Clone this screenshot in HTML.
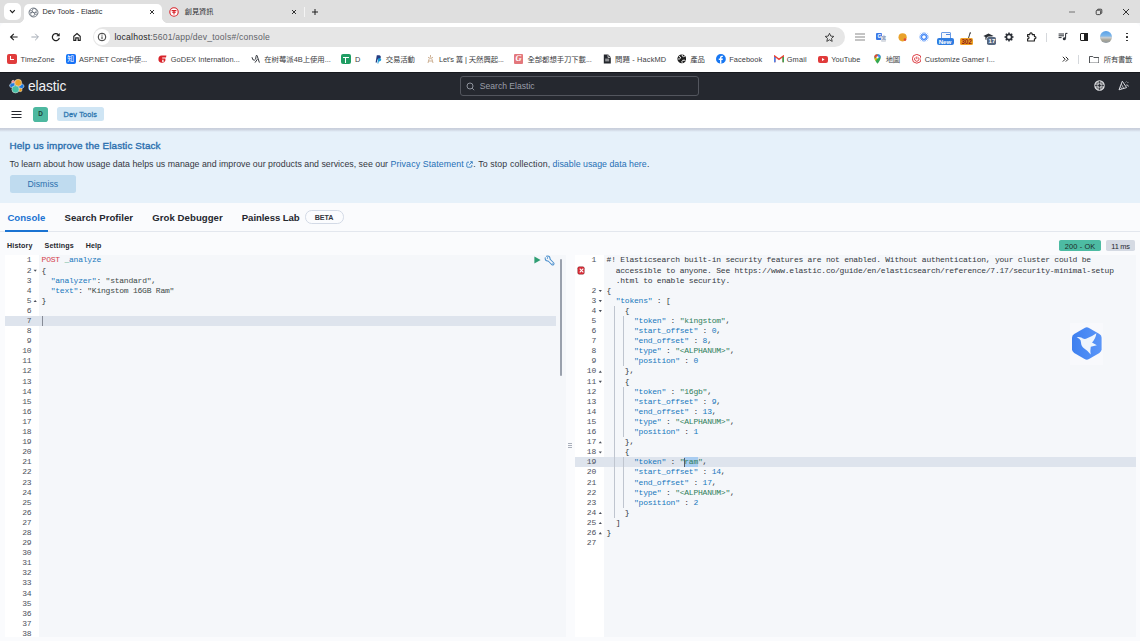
<!DOCTYPE html>
<html lang="en"><head><meta charset="utf-8"><title>Dev Tools - Elastic</title>
<style>
*{box-sizing:border-box;margin:0;padding:0}
html,body{width:1140px;height:641px;overflow:hidden;background:#fafbfd}
body{position:relative;font-family:"Liberation Sans","Noto Sans CJK TC",sans-serif;color:#343741}
.abs{position:absolute}
.t{position:absolute;white-space:nowrap;line-height:1}
/* chrome */
#tabstrip{left:0;top:0;width:1140px;height:23.3px;background:#dfdfdf}
#toolbar{left:0;top:23.3px;width:1140px;height:25.7px;background:#fff;border-radius:5px 5px 0 0}
#bookmarks{left:0;top:49px;width:1140px;height:23px;background:#fff}
#urlpill{left:93px;top:27px;width:752px;height:20px;border-radius:10px;background:#e6e6e6}
.bm{font-size:7.4px;color:#3c4043;top:55.5px}
.bmi{position:absolute;top:53.5px;width:9.5px;height:9.5px;border-radius:2px}
/* kibana */
#ehead{left:0;top:71.5px;width:1140px;height:28px;background:#25282f;border-top:.9px solid #17191e}
#sub{left:0;top:99.5px;width:1140px;height:28.3px;background:#fff}
#callout{left:0;top:127.8px;width:1140px;height:75.2px;background:#e6f1fa}
#subsh{left:0;top:127.8px;width:1140px;height:4.2px;background:linear-gradient(#c8cedb 0%,#ccd3df 35%,rgba(215,224,238,0) 100%)}
.mono{font-family:"Liberation Mono","DejaVu Sans Mono",monospace;font-size:8px;letter-spacing:-.232px;line-height:10.09px;white-space:pre;color:#343741}
.ln{position:absolute;text-align:right;color:#4d525d}
.k{color:#1878bd}.s{color:#2f7d5b}.sv{color:#3d4a48}.n{color:#1878bd}.m{color:#d63f4d}.u{color:#1878bd}
</style></head><body>
<!-- ===== browser chrome ===== -->
<div id="tabstrip" class="abs"></div>
<div id="toolbar" class="abs"></div>
<div id="bookmarks" class="abs"></div>
<div id="urlpill" class="abs"></div>

<!-- tab search -->
<div class="abs" style="left:4px;top:3px;width:16.5px;height:17px;border-radius:5px;background:#fff"></div>
<svg class="abs" style="left:8px;top:8px" width="9" height="8" viewBox="0 0 9 8"><path d="M2 2.2 L4.4 4.6 L6.8 2.2" fill="none" stroke="#1f1f1f" stroke-width="1.2"/></svg>
<!-- active tab -->
<div class="abs" style="left:24px;top:3.5px;width:137.5px;height:20.3px;border-radius:5px 5px 0 0;background:#fff"></div>
<div class="abs" style="left:19px;top:18.3px;width:5px;height:5px;background:radial-gradient(circle at 0 0,transparent 4.6px,#fff 5px)"></div>
<div class="abs" style="left:161.5px;top:18.3px;width:5px;height:5px;background:radial-gradient(circle at 100% 0,transparent 4.6px,#fff 5px)"></div>
<svg class="abs" style="left:27.5px;top:6.5px" width="11" height="11" viewBox="0 0 11 11"><circle cx="5.5" cy="5.5" r="4.5" fill="none" stroke="#5b6470" stroke-width=".8"/><circle cx="6.3" cy="3.6" r="2.1" fill="none" stroke="#5b6470" stroke-width=".7"/><circle cx="4.6" cy="7.2" r="2" fill="none" stroke="#5b6470" stroke-width=".7"/><circle cx="2.9" cy="4.6" r="1.2" fill="none" stroke="#5b6470" stroke-width=".6"/><circle cx="8" cy="6.6" r="1.2" fill="none" stroke="#5b6470" stroke-width=".6"/></svg>
<div class="t" style="left:42.5px;top:8.3px;font-size:7.3px;color:#2a2c30">Dev Tools - Elastic</div>
<svg class="abs" style="left:149px;top:9px" width="6" height="6" viewBox="0 0 6 6"><path d="M1 1L5 5M5 1L1 5" stroke="#1f1f1f" stroke-width=".9"/></svg>
<!-- tab 2 -->
<svg class="abs" style="left:169px;top:7px" width="10" height="10" viewBox="0 0 10 10"><circle cx="5" cy="5" r="4.2" fill="#fff" stroke="#d8232a" stroke-width="1.1"/><path d="M2.6 3.6H7.4M5 3.6V7.6M3.4 5.6Q5 4.4 6.6 5.6" stroke="#d8232a" stroke-width="1.1" fill="none"/></svg>
<div class="t" style="left:184.7px;top:8.2px;font-size:7.2px;color:#2a2c30">創見資訊</div>
<svg class="abs" style="left:290.5px;top:9px" width="6" height="6" viewBox="0 0 6 6"><path d="M1 1L5 5M5 1L1 5" stroke="#1f1f1f" stroke-width=".9"/></svg>
<div class="abs" style="left:304px;top:7px;width:1px;height:9.5px;background:#f4f4f4"></div>
<svg class="abs" style="left:310.5px;top:8px" width="8" height="8" viewBox="0 0 8 8"><path d="M4 1V7M1 4H7" stroke="#1f1f1f" stroke-width="1"/></svg>
<!-- window controls -->
<svg class="abs" style="left:1068px;top:8px" width="8" height="8" viewBox="0 0 8 8"><path d="M1 4H7" stroke="#555" stroke-width=".8"/></svg>
<svg class="abs" style="left:1095px;top:8px" width="8" height="8" viewBox="0 0 8 8"><rect x="1.2" y="2.2" width="4.4" height="4.4" rx="1" fill="none" stroke="#1f1f1f" stroke-width=".8"/><path d="M2.6 2.2V1.6Q2.6 1.2 3.2 1.2H6Q6.8 1.2 6.8 2V4.8Q6.8 5.4 6.2 5.4H5.6" fill="none" stroke="#1f1f1f" stroke-width=".8"/></svg>
<svg class="abs" style="left:1122px;top:8px" width="8" height="8" viewBox="0 0 8 8"><path d="M1 1L7 7M7 1L1 7" stroke="#1f1f1f" stroke-width=".9"/></svg>
<!-- toolbar icons -->
<svg class="abs" style="left:8.5px;top:32px" width="10" height="10" viewBox="0 0 10 10"><path d="M8.6 5H1.8M4.8 1.8L1.6 5L4.8 8.2" fill="none" stroke="#1f1f1f" stroke-width="1.15"/></svg>
<svg class="abs" style="left:29.5px;top:32px" width="10" height="10" viewBox="0 0 10 10"><path d="M1.4 5H8.2M5.2 1.8L8.4 5L5.2 8.2" fill="none" stroke="#a2a9b3" stroke-width="1"/></svg>
<svg class="abs" style="left:51px;top:32px" width="10" height="10" viewBox="0 0 10 10"><path d="M7.4 2.7A3.5 3.5 0 1 0 8.3 5.8" fill="none" stroke="#1f1f1f" stroke-width="1.25"/><path d="M8.7 .9V4.3H5.3Z" fill="#1f1f1f"/></svg>
<svg class="abs" style="left:72px;top:32px" width="10" height="10" viewBox="0 0 10 10"><path d="M1.8 8.4V4.2L5 1.6L8.2 4.2V8.4H6.2V5.8H3.8V8.4Z" fill="none" stroke="#1f1f1f" stroke-width="1.15"/></svg>
<!-- url -->
<div class="abs" style="left:94.4px;top:29.3px;width:15.6px;height:15.6px;border-radius:50%;background:#fff"></div>
<svg class="abs" style="left:97.3px;top:32.1px" width="10" height="10" viewBox="0 0 10 10"><circle cx="5" cy="5" r="3.8" fill="none" stroke="#1f1f1f" stroke-width=".9"/><path d="M5 4.4V7.2M5 2.6V3.6" stroke="#1f1f1f" stroke-width=".9"/></svg>
<div class="t" style="left:114.5px;top:33.2px;font-size:8.6px;letter-spacing:.2px;color:#1f1f1f">localhost<span style="color:#5f6368">:5601/app/dev_tools#/console</span></div>
<svg class="abs" style="left:824px;top:31.5px" width="11" height="11" viewBox="0 0 11 11"><path d="M5.5 1.3L6.8 4.1L9.8 4.4L7.5 6.4L8.2 9.4L5.5 7.8L2.8 9.4L3.5 6.4L1.2 4.4L4.2 4.1Z" fill="none" stroke="#333" stroke-width=".9" stroke-linejoin="round"/></svg>
<!-- bookmarks -->
<div class="t bm" style="left:20.5px;letter-spacing:0.176px">TimeZone</div>
<div class="t bm" style="left:79px;letter-spacing:-0.097px">ASP.NET Core中使...</div>
<div class="t bm" style="left:170.8px;letter-spacing:0.044px">GoDEX Internation...</div>
<div class="t bm" style="left:264.2px;letter-spacing:-0.026px">在树莓派4B上使用...</div>
<div class="t bm" style="left:355px;letter-spacing:-0.203px">D</div>
<div class="t bm" style="left:385.8px;letter-spacing:-0.191px">交易活動</div>
<div class="t bm" style="left:439px;letter-spacing:-0.103px">Let's 篝 | 天然興起...</div>
<div class="t bm" style="left:527.5px;letter-spacing:-0.091px">全部都想手刀下載...</div>
<div class="t bm" style="left:615px;letter-spacing:0.152px">問題 - HackMD</div>
<div class="t bm" style="left:690.3px;letter-spacing:-0.245px">產品</div>
<div class="t bm" style="left:729.2px;letter-spacing:0.065px">Facebook</div>
<div class="t bm" style="left:786.7px;letter-spacing:0.164px">Gmail</div>
<div class="t bm" style="left:831.3px;letter-spacing:-0.007px">YouTube</div>
<div class="t bm" style="left:885.8px;letter-spacing:-0.495px">地圖</div>
<div class="t bm" style="left:924.7px;letter-spacing:0.02px">Customize Gamer I...</div>
<div class="t bm" style="left:1103.8px;letter-spacing:-0.291px">所有書籤</div>


<!-- bookmark icons -->
<div class="bmi" style="left:7px;top:54.2px;background:#e03c3c"></div><div class="abs" style="left:10px;top:56px;width:1.3px;height:4px;background:#fff"></div><div class="abs" style="left:10px;top:59.3px;width:3.6px;height:1.2px;background:#fff"></div>
<div class="bmi" style="left:66px;top:54.2px;background:#1772f6"></div><div class="t" style="left:67.3px;top:55.6px;font-size:6.8px;color:#fff">知</div>
<svg class="abs" style="left:157px;top:54px" width="10" height="10" viewBox="0 0 10 10"><path d="M9.4 1.6H4.6A3.6 3.6 0 1 0 8.4 6.4V4.4H5V5.8H6.6V8H5.2V3.4H9Z" fill="#d8232a"/></svg>
<svg class="abs" style="left:251px;top:54px" width="10" height="10" viewBox="0 0 10 10"><path d="M1 3.2Q1.4 6.6 3.4 6.2Q5.2 5.6 5 2.4Q5 1.2 6 1.4L8.4 8.6M4 8.6L6.4 5.2" fill="none" stroke="#33373d" stroke-width="1"/></svg>
<div class="bmi" style="left:341px;top:54px;width:10px;height:10px;background:#1f9d63"></div><div class="abs" style="left:343px;top:56.6px;width:6px;height:1.5px;background:#fff"></div><div class="abs" style="left:344.8px;top:56.6px;width:1.6px;height:6px;background:#fff"></div>
<svg class="abs" style="left:373.5px;top:54px" width="8" height="10" viewBox="0 0 8 10"><path d="M1.6 8.6L2.8 1.2H5.4Q7.2 1.4 6.8 3.4Q6.4 5.4 4.2 5.4H3.4L2.9 8.6Z" fill="#253b80"/><path d="M3.4 9.6L4.2 4.2H6Q7.6 4.4 7.2 6Q6.8 7.4 5.2 7.4H4.7L4.4 9.6Z" fill="#179bd7"/></svg>
<svg class="abs" style="left:425.5px;top:54px" width="9" height="10" viewBox="0 0 9 10"><path d="M4.5 1V3.6M2 3.2L4.5 4.6L7 3.2M3.2 4.6L2 9M5.8 4.6L7 9M2.6 7H6.4" fill="none" stroke="#c8a98a" stroke-width=".9"/></svg>
<div class="bmi" style="left:513.7px;top:54.2px;background:#e3777c;border-radius:1px"></div><div class="t" style="left:515.4px;top:54.6px;font-size:8.4px;color:#fff;font-style:italic;font-weight:bold;font-family:'Liberation Serif',serif">G</div>
<svg class="abs" style="left:602.5px;top:54px" width="8.5" height="10" viewBox="0 0 8.5 10"><path d="M.8.6H5.2L7.8 3.2V9.4H.8Z" fill="#24272d"/><path d="M5 .8V3.4H7.6" fill="none" stroke="#fff" stroke-width=".7"/><path d="M2.2 5.2H6.2M2.2 6.8H6.2" stroke="#fff" stroke-width=".7"/></svg>
<svg class="abs" style="left:676.8px;top:54.2px" width="9.6" height="9.6" viewBox="0 0 10 10"><circle cx="5" cy="5" r="4.6" fill="#1f1f1f"/><path d="M2.2 2.4Q4 3 3.6 4.4Q3.2 5.4 1.2 5.2M5.4 .9Q5 2.6 6.8 2.8Q8.4 2.6 8 1.8M5.4 9.2Q4.6 7.2 6 6.6Q7.8 6.2 8.8 6.8" fill="none" stroke="#fff" stroke-width="1"/></svg>
<svg class="abs" style="left:715.8px;top:54.2px" width="9.8" height="9.8" viewBox="0 0 10 10"><circle cx="5" cy="5" r="5" fill="#1877f2"/><path d="M5.5 10V6.2H6.8L7 4.7H5.5V3.8Q5.5 3.1 6.3 3.1H7V1.8Q6.5 1.7 5.9 1.7Q4.1 1.7 4.1 3.6V4.7H2.8V6.2H4.1V10Z" fill="#fff"/></svg>
<svg class="abs" style="left:773.5px;top:55px" width="10" height="8" viewBox="0 0 10 8"><path d="M.8 7.2V1.2L5 4.4L9.2 1.2V7.2" fill="none" stroke="#ea4335" stroke-width="1.5"/><path d="M.8 7.2V2" stroke="#4285f4" stroke-width="1.5"/><path d="M9.2 7.2V2" stroke="#34a853" stroke-width="1.5"/></svg>
<svg class="abs" style="left:818px;top:56px" width="10" height="7" viewBox="0 0 10 7"><rect width="10" height="7" rx="2" fill="#e03a3a"/><path d="M4 2L6.6 3.5L4 5Z" fill="#fff"/></svg>
<svg class="abs" style="left:873.5px;top:54px" width="7" height="10" viewBox="0 0 7 10"><path d="M3.5 9.8Q.3 5.6 .3 3.4A3.2 3.2 0 0 1 6.7 3.4Q6.7 5.6 3.5 9.8Z" fill="#34a853"/><path d="M3.5.2A3.2 3.2 0 0 1 6.7 3.4L3.5 3.4Z" fill="#4285f4"/><path d="M.3 3.4A3.2 3.2 0 0 1 3.5 .2V3.4Z" fill="#ea4335"/><path d="M.5 4.4L3.5 3.4L1.8 7Z" fill="#fbbc04"/><circle cx="3.5" cy="3.4" r="1.1" fill="#fff"/></svg>
<svg class="abs" style="left:911.5px;top:54.2px" width="9.6" height="9.6" viewBox="0 0 10 10"><path d="M5 .4L8.6 1.8L9.6 5L8.6 8.2L5 9.6L1.400 8.2L.4 5L1.400 1.800Z" fill="none" stroke="#d8232a" stroke-width=".9"/><path d="M5 2.6V5.4M3.400 3.600A2.300 2.300 0 1 0 6.600 3.600" fill="none" stroke="#d8232a" stroke-width=".9"/></svg>
<svg class="abs" style="left:1061.5px;top:56.2px" width="7" height="6.400" viewBox="0 0 7 6.400"><path d="M.8.8L3.200 3.200L.8 5.600M3.800.8L6.200 3.200L3.800 5.600" fill="none" stroke="#1f1f1f" stroke-width=".95"/></svg>
<div class="abs" style="left:1078.2px;top:55px;width:1px;height:9px;background:#d5d8dc"></div>
<svg class="abs" style="left:1088.500px;top:55.500px" width="10.400" height="7.600" viewBox="0 0 10.400 7.600"><path d="M.5 .5H3.800L4.800 1.500H9.900V7.100H.5Z" fill="none" stroke="#3c4043" stroke-width=".9" stroke-linejoin="round"/></svg>

<!-- extension icons -->
<div class="abs" style="left:855px;top:33.2px;width:9.6px;height:2px;background:#c4c4c4"></div><div class="abs" style="left:855px;top:36.200px;width:9.6px;height:2px;background:#c4c4c4"></div><div class="abs" style="left:855px;top:39.200px;width:9.6px;height:2px;background:#c4c4c4"></div>
<div class="abs" style="left:876.3px;top:33px;width:6px;height:6.5px;background:#3b78e7;border-radius:1px"></div><div class="abs" style="left:880.5px;top:35.5px;width:5px;height:6px;background:#d9dde3;border-radius:1px"></div><div class="t" style="left:877.400px;top:33.800px;font-size:5px;color:#fff;font-weight:bold">G</div><div class="t" style="left:881.500px;top:36.300px;font-size:4.600px;color:#4b6ea8">文</div>
<svg class="abs" style="left:897px;top:32px" width="11" height="11" viewBox="0 0 11 11"><circle cx="5.600" cy="5.300" r="4.100" fill="#e9a22b"/><circle cx="8" cy="7.600" r="1.300" fill="#e2453c"/></svg>
<svg class="abs" style="left:918.900px;top:32px" width="10" height="10" viewBox="0 0 10 10"><circle cx="5" cy="5" r="2.400" fill="none" stroke="#3b82f6" stroke-width="1.200"/><g stroke="#3b82f6" stroke-width=".9"><path d="M5 .3V2M5 8V9.700M.3 5H2M8 5H9.700M1.700 1.700L2.900 2.900M7.100 7.100L8.300 8.300M8.300 1.700L7.100 2.900M2.900 7.100L1.700 8.300"/><path d="M3.200 .7L3.800 2.200M6.800 .7L6.200 2.200M3.200 9.300L3.800 7.800M6.800 9.300L6.200 7.800M.7 3.200L2.200 3.800M.7 6.800L2.200 6.200M9.300 3.200L7.800 3.800M9.300 6.800L7.800 6.200" stroke-width=".6"/></g></svg>
<div class="abs" style="left:941px;top:32.300px;width:9.500px;height:6.500px;border:.8px solid #6a9be6;border-radius:1px;background:#f3f7fd"></div><div class="abs" style="left:945.500px;top:33.600px;width:4px;height:1.300px;background:#4d86de"></div>
<div class="abs" style="left:936.800px;top:38.200px;width:17.200px;height:6.800px;border-radius:2px;background:#2f7de1"></div><div class="t" style="left:938.700px;top:38.700px;font-size:6.200px;font-weight:bold;color:#fff;letter-spacing:-.05px">New</div>
<svg class="abs" style="left:964px;top:31.500px" width="8" height="8" viewBox="0 0 8 8"><path d="M6.200 .8L4.400 6.400" stroke="#3c3c3c" stroke-width="1"/><circle cx="6.300" cy=".9" r=".7" fill="#3c3c3c"/></svg>
<div class="abs" style="left:960.300px;top:38.200px;width:12.700px;height:6.800px;border-radius:1.500px;background:#f0a024"></div><div class="t" style="left:961.300px;top:38.500px;font-size:6.600px;font-weight:bold;color:#8c1d18;letter-spacing:-.15px">302</div>
<svg class="abs" style="left:983.300px;top:32.500px" width="11" height="8" viewBox="0 0 11 8"><path d="M.4 3L5.500 .4L10.600 3L5.500 5.600Z" fill="#2b2f36"/><path d="M2.400 4V6.600Q5.500 8.400 8.600 6.600V4" fill="#2b2f36"/></svg>
<div class="abs" style="left:986.800px;top:37px;width:9.400px;height:8px;border-radius:1.800px;background:#56677f;box-shadow:0 0 0 .6px #fff"></div><div class="t" style="left:988.600px;top:38.300px;font-size:6px;font-weight:bold;color:#fff;letter-spacing:.1px">17</div>
<svg class="abs" style="left:1004.200px;top:32px" width="10" height="10" viewBox="0 0 10 10"><circle cx="5" cy="5" r="2.700" fill="none" stroke="#2b2f36" stroke-width="1.700"/><path d="M5 .5V2M5 8V9.500M.5 5H2M8 5H9.500M1.800 1.800L2.900 2.900M7.100 7.100L8.200 8.200M8.200 1.800L7.100 2.900M2.900 7.100L1.800 8.200" stroke="#2b2f36" stroke-width="1.500"/><circle cx="5" cy="5" r="1" fill="#fff"/></svg>
<svg class="abs" style="left:1026px;top:32px" width="10.500" height="10" viewBox="0 0 10.500 10"><path d="M1.600 2.600H3.800Q3.600 .9 5 .9Q6.400 .9 6.200 2.600H8.400V4.600Q9.900 4.400 9.900 5.700Q9.900 7 8.400 6.800V9H1.600V6.800Q3 7 3 5.700Q3 4.400 1.600 4.600Z" fill="none" stroke="#1f1f1f" stroke-width="1.100" stroke-linejoin="round"/></svg>
<div class="abs" style="left:1046px;top:32.800px;width:1px;height:8.800px;background:#d5d8dc"></div>
<svg class="abs" style="left:1058px;top:32px" width="10" height="10" viewBox="0 0 10 10"><path d="M.6 2H6M.6 3.800H6M.6 5.600H3.600" stroke="#2b2f36" stroke-width="1"/><path d="M7.600 1.400V6.600" stroke="#2b2f36" stroke-width="1"/><circle cx="6.300" cy="6.800" r="1.500" fill="#2b2f36"/><path d="M7.600 1.400H9.400" stroke="#2b2f36" stroke-width="1.100"/></svg>
<div class="abs" style="left:1080px;top:33.200px;width:8.400px;height:8px;border:1.100px solid #1f1f1f;border-radius:1px"></div><div class="abs" style="left:1084.300px;top:33.200px;width:4.100px;height:8px;background:#1f1f1f"></div>
<div class="abs" style="left:1099.600px;top:31px;width:12px;height:12px;border-radius:50%;background:linear-gradient(#5aa0e6 0%,#7db7ea 40%,#c9cdd0 55%,#a9a596 75%,#8f9aa3 100%)"></div>
<div class="abs" style="left:1126px;top:32.800px;width:1.700px;height:1.700px;border-radius:50%;background:#1f1f1f"></div><div class="abs" style="left:1126px;top:36.200px;width:1.700px;height:1.700px;border-radius:50%;background:#1f1f1f"></div><div class="abs" style="left:1126px;top:39.600px;width:1.700px;height:1.700px;border-radius:50%;background:#1f1f1f"></div>
<!-- ===== kibana ===== -->
<div id="ehead" class="abs"></div>
<div id="sub" class="abs"></div>
<div id="callout" class="abs"></div>
<div id="subsh" class="abs"></div>
<!--KB-START-->
<!-- elastic logo -->
<svg class="abs" style="left:8.8px;top:78px" width="16" height="16" viewBox="0 0 16 16"><g stroke="#f3f1ea" stroke-width=".5"><circle cx="4.200" cy="3.900" r="1.550" fill="#f2838f"/><ellipse cx="3.300" cy="7.200" rx="2.800" ry="2.100" fill="#1b78e0" transform="rotate(-25 3.300 7.200)"/><ellipse cx="12.400" cy="8.400" rx="2.700" ry="2.200" fill="#1b78e0" transform="rotate(-25 12.400 8.400)"/><circle cx="11.300" cy="11.900" r="1.750" fill="#f5a00f"/><circle cx="9.200" cy="4.800" r="3.450" fill="#eba22a"/><circle cx="6.500" cy="11.300" r="3.650" fill="#46bfa6"/></g></svg>
<div class="t" style="left:28.300px;top:78.600px;font-size:14.300px;color:#f1f2f5;transform:scaleX(.96);transform-origin:0 0;letter-spacing:-.1px">elastic</div>
<!-- search box -->
<div class="abs" style="left:460px;top:76px;width:238.500px;height:19.500px;border:1px solid #53565e;border-radius:3px;background:#25282f"></div>
<svg class="abs" style="left:465.500px;top:81.500px" width="9" height="9" viewBox="0 0 9 9"><circle cx="4" cy="4" r="3" fill="none" stroke="#9a9ea8" stroke-width=".9"/><path d="M6.200 6.200L8.200 8.200" stroke="#9a9ea8" stroke-width=".9"/></svg>
<!-- header right icons -->
<svg class="abs" style="left:1094.300px;top:80.300px" width="11" height="11" viewBox="0 0 11 11"><circle cx="5.500" cy="5.500" r="3.300" fill="none" stroke="rgba(255,255,255,.45)" stroke-width="2.400"/><circle cx="5.500" cy="5.500" r="4.700" fill="none" stroke="#f2f3f6" stroke-width="1.050"/><circle cx="5.500" cy="5.500" r="1.900" fill="none" stroke="#f2f3f6" stroke-width=".95"/><path d="M5.500 .8V3.600M5.500 7.400V10.200M.8 5.500H3.600M7.400 5.500H10.200" stroke="#25282f" stroke-width=".7"/></svg>
<svg class="abs" style="left:1117.500px;top:80.300px" width="11.500" height="11" viewBox="0 0 11.500 11"><path d="M4.300 1.200L8.600 7.600L1 9.800Z" fill="none" stroke="#d8dae0" stroke-width="1" stroke-linejoin="round"/><path d="M3.400 4.200L5.600 8.200M2.400 6.600L3.600 8.800" stroke="#d8dae0" stroke-width=".8"/><path d="M8.200 5Q10 4.400 10.400 6.600" fill="none" stroke="#d8dae0" stroke-width=".9"/><path d="M7.600 2.400L8.400 1.600M9.600 2.800L10.400 2" stroke="#d8dae0" stroke-width=".8"/></svg>
<!-- sub header -->
<svg class="abs" style="left:11px;top:109px" width="12" height="11" viewBox="0 0 12 11"><path d="M.5 2.500H10.500M.5 5.500H10.500M.5 8.500H10.500" stroke="#25272e" stroke-width="1.150"/></svg>
<div class="abs" style="left:33px;top:107px;width:14.500px;height:14.500px;border-radius:2.800px;background:#4db8a0"></div>
<div class="abs" style="left:57px;top:107.300px;width:47px;height:14px;border-radius:2.500px;background:#cfe5f4"></div>
<!-- callout -->
<svg class="abs" style="left:466.300px;top:160.500px" width="7" height="7" viewBox="0 0 7 7"><path d="M3 1.200H1.600Q.8 1.200 .8 2V5.400Q.8 6.200 1.600 6.200H5Q5.800 6.200 5.800 5.400V4" fill="none" stroke="#1f6fb5" stroke-width=".8"/><path d="M3.200 3.800L6.200 .8M4.200 .7H6.300V2.800" fill="none" stroke="#1f6fb5" stroke-width=".8"/></svg>
<div class="abs" style="left:9.500px;top:174.600px;width:66.300px;height:18.700px;border-radius:2.500px;background:#bfdbef"></div>
<!-- tabs -->
<div class="abs" style="left:0;top:230.800px;width:1140px;height:1px;background:#e3e7ee"></div>
<div class="abs" style="left:4.800px;top:229.700px;width:43.200px;height:1.900px;background:#1a73d2"></div>
<div class="abs" style="left:304.600px;top:210.200px;width:39.300px;height:13.400px;border:1px solid #d3dae6;border-radius:6.700px;background:#fbfcfe"></div>
<!-- status badges -->
<div class="abs" style="left:1059.300px;top:240px;width:41.500px;height:11.300px;border-radius:1.800px;background:#4dbba3"></div>
<div class="abs" style="left:1105.600px;top:240px;width:29.400px;height:11.300px;border-radius:1.800px;background:#d5dae3"></div>
<div class="t" style="left:479.8px;top:81.8px;font-size:8.6px;letter-spacing:-0.01px;color:#9a9ea8;">Search Elastic</div>
<div class="t" style="left:38.3px;top:111.2px;font-size:6.4px;letter-spacing:-0.625px;font-weight:bold;color:#1b3f38;">D</div>
<div class="t" style="left:63.6px;top:111.1px;font-size:7.3px;letter-spacing:0.188px;-webkit-text-stroke:.3px #2e77b0;color:#2e77b0;">Dev Tools</div>
<div class="t" style="left:9.5px;top:140.9px;font-size:9.9px;letter-spacing:0.124px;-webkit-text-stroke:.35px #2a6fae;color:#2a6fae;">Help us improve the Elastic Stack</div>
<div class="t" style="left:9.5px;top:160.1px;font-size:8.8px;letter-spacing:0.005px;color:#343741;">To learn about how usage data helps us manage and improve our products and services, see our</div>
<div class="t" style="left:390.5px;top:160.1px;font-size:8.8px;letter-spacing:0.118px;color:#1f6fb5;">Privacy Statement</div>
<div class="t" style="left:473.3px;top:160.1px;font-size:8.8px;letter-spacing:0.107px;color:#343741;">. To stop collection,</div>
<div class="t" style="left:552.6px;top:160.1px;font-size:8.8px;letter-spacing:0.008px;color:#1f6fb5;">disable usage data here</div>
<div class="t" style="left:646.9px;top:160.1px;font-size:8.8px;letter-spacing:-0.153px;color:#343741;">.</div>
<div class="t" style="left:27.4px;top:179.6px;font-size:8.7px;letter-spacing:0.056px;color:#2a6fae;">Dismiss</div>
<div class="t" style="left:7.4px;top:212.9px;font-size:9.6px;letter-spacing:0.006px;font-weight:bold;color:#1a73d2;">Console</div>
<div class="t" style="left:64.6px;top:212.9px;font-size:9.6px;letter-spacing:0.009px;font-weight:bold;color:#25272e;">Search Profiler</div>
<div class="t" style="left:152.3px;top:212.9px;font-size:9.6px;letter-spacing:0.05px;font-weight:bold;color:#25272e;">Grok Debugger</div>
<div class="t" style="left:241.8px;top:212.9px;font-size:9.6px;letter-spacing:-0.071px;font-weight:bold;color:#25272e;">Painless Lab</div>
<div class="t" style="left:314.7px;top:213.7px;font-size:7.2px;letter-spacing:-0.108px;font-weight:bold;color:#343741;">BETA</div>
<div class="t" style="left:7px;top:243px;font-size:7.1px;letter-spacing:0.15px;font-weight:bold;color:#25272e;">History</div>
<div class="t" style="left:44.5px;top:243px;font-size:7.1px;letter-spacing:0.189px;font-weight:bold;color:#25272e;">Settings</div>
<div class="t" style="left:85.7px;top:243px;font-size:7.1px;letter-spacing:0.131px;font-weight:bold;color:#25272e;">Help</div>
<div class="t" style="left:1064.8px;top:243.2px;font-size:7.4px;letter-spacing:0.115px;color:#1d2b28;">200 - OK</div>
<div class="t" style="left:1111.3px;top:243.2px;font-size:7.4px;letter-spacing:-0.216px;color:#25272e;">11 ms</div>


<!-- left editor -->
<div class="abs" style="left:5px;top:254.500px;width:561px;height:382px;background:#f5f7fa"></div>
<div class="abs" style="left:5px;top:254.500px;width:34.200px;height:382px;background:#fff"></div>
<div class="abs" style="left:5px;top:315.900px;width:551px;height:10.100px;background:#dee4ed"></div>
<div class="abs" style="left:41.700px;top:316.100px;width:1.100px;height:9.600px;background:#868b96"></div>
<div class="abs" style="left:560.300px;top:259px;width:1.800px;height:117px;background:#9aa1ad;border-radius:1px"></div>
<svg class="abs" style="left:534px;top:256px" width="7" height="8" viewBox="0 0 7 8"><path d="M.4 .4L6.600 4L.4 7.600Z" fill="#2f9e73"/></svg>
<svg class="abs" style="left:543.500px;top:254.600px" width="11.500" height="11.500" viewBox="0 0 11.500 11.500"><path d="M4.600 4.600L8.700 8.700" stroke="#4a8fcd" stroke-width="3.500" stroke-linecap="round"/><circle cx="3.600" cy="3.500" r="2.900" fill="#4a8fcd"/><path d="M4.600 4.600L8.700 8.700" stroke="#f5f7fa" stroke-width="1.700" stroke-linecap="round"/><circle cx="3.600" cy="3.500" r="1.900" fill="#f5f7fa"/><path d="M3.800 3.700L.8 .7" stroke="#f5f7fa" stroke-width="1.500"/><path d="M2.300 1.300L3.900 2.900L2.900 4.100" fill="none" stroke="#4a8fcd" stroke-width=".8"/><circle cx="8.700" cy="8.700" r=".55" fill="#4a8fcd"/></svg>
<!-- resizer -->
<div class="abs" style="left:568px;top:443px;width:3.600px;height:1px;background:#a9afba"></div><div class="abs" style="left:568px;top:445px;width:3.600px;height:1px;background:#a9afba"></div><div class="abs" style="left:568px;top:447px;width:3.600px;height:1px;background:#a9afba"></div>
<!-- right editor -->
<div class="abs" style="left:575px;top:254.500px;width:560.800px;height:382px;background:#f5f7fa"></div>
<div class="abs" style="left:575px;top:254.500px;width:28.800px;height:382px;background:#fff"></div>
<div class="abs" style="left:575px;top:457.300px;width:560.800px;height:10.100px;background:#dee4ed"></div>
<div class="abs" style="left:683.800px;top:457.400px;width:13.800px;height:10.100px;background:#a9cdf1"></div>
<div class="abs" style="left:683.600px;top:458px;width:.8px;height:8.800px;background:#555c68"></div>
<div class="abs" style="left:577.700px;top:266.700px;width:6.600px;height:7.300px;border-radius:1.200px;background:#d62a35;box-shadow:0 0 0 .5px #8a2a30"></div>
<svg class="abs" style="left:578.500px;top:267.850px" width="5" height="5" viewBox="0 0 5 5"><path d="M.7 .7L4.300 4.300M4.300 .7L.7 4.300" stroke="#fff" stroke-width="1.100"/></svg>
<!-- left gutter -->
<div class="mono ln" style="left:11.399999999999999px;width:20px;top:255.45px">1</div>
<div class="mono ln" style="left:11.399999999999999px;width:20px;top:265.54px">2</div><svg class="abs" style="left:0;top:0;overflow:visible" width="1" height="1"><polygon points="33.6,269.74399999999997 36.800000000000004,269.74399999999997 35.2,271.844" fill="#4a4f5a"/></svg>
<div class="mono ln" style="left:11.399999999999999px;width:20px;top:275.64px">3</div>
<div class="mono ln" style="left:11.399999999999999px;width:20px;top:285.73px">4</div>
<div class="mono ln" style="left:11.399999999999999px;width:20px;top:295.83px">5</div><svg class="abs" style="left:0;top:0;overflow:visible" width="1" height="1"><polygon points="33.6,302.02599999999995 36.800000000000004,302.02599999999995 35.2,299.92599999999993" fill="#4a4f5a"/></svg>
<div class="mono ln" style="left:11.399999999999999px;width:20px;top:305.92px">6</div>
<div class="mono ln" style="left:11.399999999999999px;width:20px;top:316.01px">7</div>
<div class="mono ln" style="left:11.399999999999999px;width:20px;top:326.11px">8</div>
<div class="mono ln" style="left:11.399999999999999px;width:20px;top:336.20px">9</div>
<div class="mono ln" style="left:11.399999999999999px;width:20px;top:346.30px">10</div>
<div class="mono ln" style="left:11.399999999999999px;width:20px;top:356.39px">11</div>
<div class="mono ln" style="left:11.399999999999999px;width:20px;top:366.48px">12</div>
<div class="mono ln" style="left:11.399999999999999px;width:20px;top:376.58px">13</div>
<div class="mono ln" style="left:11.399999999999999px;width:20px;top:386.67px">14</div>
<div class="mono ln" style="left:11.399999999999999px;width:20px;top:396.77px">15</div>
<div class="mono ln" style="left:11.399999999999999px;width:20px;top:406.86px">16</div>
<div class="mono ln" style="left:11.399999999999999px;width:20px;top:416.95px">17</div>
<div class="mono ln" style="left:11.399999999999999px;width:20px;top:427.05px">18</div>
<div class="mono ln" style="left:11.399999999999999px;width:20px;top:437.14px">19</div>
<div class="mono ln" style="left:11.399999999999999px;width:20px;top:447.24px">20</div>
<div class="mono ln" style="left:11.399999999999999px;width:20px;top:457.33px">21</div>
<div class="mono ln" style="left:11.399999999999999px;width:20px;top:467.42px">22</div>
<div class="mono ln" style="left:11.399999999999999px;width:20px;top:477.52px">23</div>
<div class="mono ln" style="left:11.399999999999999px;width:20px;top:487.61px">24</div>
<div class="mono ln" style="left:11.399999999999999px;width:20px;top:497.71px">25</div>
<div class="mono ln" style="left:11.399999999999999px;width:20px;top:507.80px">26</div>
<div class="mono ln" style="left:11.399999999999999px;width:20px;top:517.89px">27</div>
<div class="mono ln" style="left:11.399999999999999px;width:20px;top:527.99px">28</div>
<div class="mono ln" style="left:11.399999999999999px;width:20px;top:538.08px">29</div>
<div class="mono ln" style="left:11.399999999999999px;width:20px;top:548.18px">30</div>
<div class="mono ln" style="left:11.399999999999999px;width:20px;top:558.27px">31</div>
<div class="mono ln" style="left:11.399999999999999px;width:20px;top:568.36px">32</div>
<div class="mono ln" style="left:11.399999999999999px;width:20px;top:578.46px">33</div>
<div class="mono ln" style="left:11.399999999999999px;width:20px;top:588.55px">34</div>
<div class="mono ln" style="left:11.399999999999999px;width:20px;top:598.65px">35</div>
<div class="mono ln" style="left:11.399999999999999px;width:20px;top:608.74px">36</div>
<div class="mono ln" style="left:11.399999999999999px;width:20px;top:618.83px">37</div>
<div class="mono ln" style="left:11.399999999999999px;width:20px;top:628.93px">38</div>
<!-- left code -->
<div class="mono abs" style="left:41.600px;top:255.45px"><span class="m">POST</span> <span class="u"><span style="color:#2f9e73">_</span>analyze</span></div>
<div class="mono abs" style="left:41.600px;top:265.54px">{</div>
<div class="mono abs" style="left:41.600px;top:275.64px">  <span class="k">"analyzer"</span>: <span class="sv">"standard"</span>,</div>
<div class="mono abs" style="left:41.600px;top:285.73px">  <span class="k">"text"</span>: <span class="sv">"Kingstom 16GB Ram"</span></div>
<div class="mono abs" style="left:41.600px;top:295.83px">}</div>
<!-- right gutter -->
<div class="mono ln" style="left:576px;width:20px;top:255.45px">1</div>
<div class="mono ln" style="left:576px;width:20px;top:285.73px">2</div><svg class="abs" style="left:0;top:0;overflow:visible" width="1" height="1"><polygon points="598.6999999999999,289.93199999999996 601.9,289.93199999999996 600.3,292.032" fill="#4a4f5a"/></svg>
<div class="mono ln" style="left:576px;width:20px;top:295.83px">3</div><svg class="abs" style="left:0;top:0;overflow:visible" width="1" height="1"><polygon points="598.6999999999999,300.02599999999995 601.9,300.02599999999995 600.3,302.126" fill="#4a4f5a"/></svg>
<div class="mono ln" style="left:576px;width:20px;top:305.92px">4</div><svg class="abs" style="left:0;top:0;overflow:visible" width="1" height="1"><polygon points="598.6999999999999,310.11999999999995 601.9,310.11999999999995 600.3,312.21999999999997" fill="#4a4f5a"/></svg>
<div class="mono ln" style="left:576px;width:20px;top:316.01px">5</div>
<div class="mono ln" style="left:576px;width:20px;top:326.11px">6</div>
<div class="mono ln" style="left:576px;width:20px;top:336.20px">7</div>
<div class="mono ln" style="left:576px;width:20px;top:346.30px">8</div>
<div class="mono ln" style="left:576px;width:20px;top:356.39px">9</div>
<div class="mono ln" style="left:576px;width:20px;top:366.48px">10</div><svg class="abs" style="left:0;top:0;overflow:visible" width="1" height="1"><polygon points="598.6999999999999,372.68399999999997 601.9,372.68399999999997 600.3,370.58399999999995" fill="#4a4f5a"/></svg>
<div class="mono ln" style="left:576px;width:20px;top:376.58px">11</div><svg class="abs" style="left:0;top:0;overflow:visible" width="1" height="1"><polygon points="598.6999999999999,380.77799999999996 601.9,380.77799999999996 600.3,382.878" fill="#4a4f5a"/></svg>
<div class="mono ln" style="left:576px;width:20px;top:386.67px">12</div>
<div class="mono ln" style="left:576px;width:20px;top:396.77px">13</div>
<div class="mono ln" style="left:576px;width:20px;top:406.86px">14</div>
<div class="mono ln" style="left:576px;width:20px;top:416.95px">15</div>
<div class="mono ln" style="left:576px;width:20px;top:427.05px">16</div>
<div class="mono ln" style="left:576px;width:20px;top:437.14px">17</div><svg class="abs" style="left:0;top:0;overflow:visible" width="1" height="1"><polygon points="598.6999999999999,443.3419999999999 601.9,443.3419999999999 600.3,441.2419999999999" fill="#4a4f5a"/></svg>
<div class="mono ln" style="left:576px;width:20px;top:447.24px">18</div><svg class="abs" style="left:0;top:0;overflow:visible" width="1" height="1"><polygon points="598.6999999999999,451.436 601.9,451.436 600.3,453.536" fill="#4a4f5a"/></svg>
<div class="mono ln" style="left:576px;width:20px;top:457.33px">19</div>
<div class="mono ln" style="left:576px;width:20px;top:467.42px">20</div>
<div class="mono ln" style="left:576px;width:20px;top:477.52px">21</div>
<div class="mono ln" style="left:576px;width:20px;top:487.61px">22</div>
<div class="mono ln" style="left:576px;width:20px;top:497.71px">23</div>
<div class="mono ln" style="left:576px;width:20px;top:507.80px">24</div><svg class="abs" style="left:0;top:0;overflow:visible" width="1" height="1"><polygon points="598.6999999999999,514.0 601.9,514.0 600.3,511.9" fill="#4a4f5a"/></svg>
<div class="mono ln" style="left:576px;width:20px;top:517.89px">25</div><svg class="abs" style="left:0;top:0;overflow:visible" width="1" height="1"><polygon points="598.6999999999999,524.094 601.9,524.094 600.3,521.994" fill="#4a4f5a"/></svg>
<div class="mono ln" style="left:576px;width:20px;top:527.99px">26</div><svg class="abs" style="left:0;top:0;overflow:visible" width="1" height="1"><polygon points="598.6999999999999,534.1880000000001 601.9,534.1880000000001 600.3,532.0880000000001" fill="#4a4f5a"/></svg>
<div class="mono ln" style="left:576px;width:20px;top:538.08px">27</div>
<!-- right code -->
<div class="abs" style="left:614.1px;top:305.92px;width:1.1px;height:10.094px;background:#bfc5cf"></div><div class="abs" style="left:614.1px;top:316.01px;width:1.1px;height:10.094px;background:#bfc5cf"></div><div class="abs" style="left:623.3px;top:316.01px;width:1.1px;height:10.094px;background:#bfc5cf"></div><div class="abs" style="left:614.1px;top:326.11px;width:1.1px;height:10.094px;background:#bfc5cf"></div><div class="abs" style="left:623.3px;top:326.11px;width:1.1px;height:10.094px;background:#bfc5cf"></div><div class="abs" style="left:614.1px;top:336.20px;width:1.1px;height:10.094px;background:#bfc5cf"></div><div class="abs" style="left:623.3px;top:336.20px;width:1.1px;height:10.094px;background:#bfc5cf"></div><div class="abs" style="left:614.1px;top:346.30px;width:1.1px;height:10.094px;background:#bfc5cf"></div><div class="abs" style="left:623.3px;top:346.30px;width:1.1px;height:10.094px;background:#bfc5cf"></div><div class="abs" style="left:614.1px;top:356.39px;width:1.1px;height:10.094px;background:#bfc5cf"></div><div class="abs" style="left:623.3px;top:356.39px;width:1.1px;height:10.094px;background:#bfc5cf"></div><div class="abs" style="left:614.1px;top:366.48px;width:1.1px;height:10.094px;background:#bfc5cf"></div><div class="abs" style="left:614.1px;top:376.58px;width:1.1px;height:10.094px;background:#bfc5cf"></div><div class="abs" style="left:614.1px;top:386.67px;width:1.1px;height:10.094px;background:#bfc5cf"></div><div class="abs" style="left:623.3px;top:386.67px;width:1.1px;height:10.094px;background:#bfc5cf"></div><div class="abs" style="left:614.1px;top:396.77px;width:1.1px;height:10.094px;background:#bfc5cf"></div><div class="abs" style="left:623.3px;top:396.77px;width:1.1px;height:10.094px;background:#bfc5cf"></div><div class="abs" style="left:614.1px;top:406.86px;width:1.1px;height:10.094px;background:#bfc5cf"></div><div class="abs" style="left:623.3px;top:406.86px;width:1.1px;height:10.094px;background:#bfc5cf"></div><div class="abs" style="left:614.1px;top:416.95px;width:1.1px;height:10.094px;background:#bfc5cf"></div><div class="abs" style="left:623.3px;top:416.95px;width:1.1px;height:10.094px;background:#bfc5cf"></div><div class="abs" style="left:614.1px;top:427.05px;width:1.1px;height:10.094px;background:#bfc5cf"></div><div class="abs" style="left:623.3px;top:427.05px;width:1.1px;height:10.094px;background:#bfc5cf"></div><div class="abs" style="left:614.1px;top:437.14px;width:1.1px;height:10.094px;background:#bfc5cf"></div><div class="abs" style="left:614.1px;top:447.24px;width:1.1px;height:10.094px;background:#bfc5cf"></div><div class="abs" style="left:614.1px;top:457.33px;width:1.1px;height:10.094px;background:#bfc5cf"></div><div class="abs" style="left:623.3px;top:457.33px;width:1.1px;height:10.094px;background:#bfc5cf"></div><div class="abs" style="left:614.1px;top:467.42px;width:1.1px;height:10.094px;background:#bfc5cf"></div><div class="abs" style="left:623.3px;top:467.42px;width:1.1px;height:10.094px;background:#bfc5cf"></div><div class="abs" style="left:614.1px;top:477.52px;width:1.1px;height:10.094px;background:#bfc5cf"></div><div class="abs" style="left:623.3px;top:477.52px;width:1.1px;height:10.094px;background:#bfc5cf"></div><div class="abs" style="left:614.1px;top:487.61px;width:1.1px;height:10.094px;background:#bfc5cf"></div><div class="abs" style="left:623.3px;top:487.61px;width:1.1px;height:10.094px;background:#bfc5cf"></div><div class="abs" style="left:614.1px;top:497.71px;width:1.1px;height:10.094px;background:#bfc5cf"></div><div class="abs" style="left:623.3px;top:497.71px;width:1.1px;height:10.094px;background:#bfc5cf"></div><div class="abs" style="left:614.1px;top:507.80px;width:1.1px;height:10.094px;background:#bfc5cf"></div>
<div class="mono abs" style="left:606.600px;top:255.45px">#! Elasticsearch built-in security features are not enabled. Without authentication, your cluster could be</div>
<div class="mono abs" style="left:606.600px;top:265.54px">  accessible to anyone. See https://www.elastic.co/guide/en/elasticsearch/reference/7.17/security-minimal-setup</div>
<div class="mono abs" style="left:606.600px;top:275.64px">  .html to enable security.</div>
<div class="mono abs" style="left:606.600px;top:285.73px">{</div>
<div class="mono abs" style="left:606.600px;top:295.83px">  <span class="k">"tokens"</span> : [</div>
<div class="mono abs" style="left:606.600px;top:305.92px">    {</div>
<div class="mono abs" style="left:606.600px;top:316.01px">      <span class="k">"token"</span> : <span class="s">"kingstom"</span>,</div>
<div class="mono abs" style="left:606.600px;top:326.11px">      <span class="k">"start_offset"</span> : <span class="n">0</span>,</div>
<div class="mono abs" style="left:606.600px;top:336.20px">      <span class="k">"end_offset"</span> : <span class="n">8</span>,</div>
<div class="mono abs" style="left:606.600px;top:346.30px">      <span class="k">"type"</span> : <span class="s">"&lt;ALPHANUM&gt;"</span>,</div>
<div class="mono abs" style="left:606.600px;top:356.39px">      <span class="k">"position"</span> : <span class="n">0</span></div>
<div class="mono abs" style="left:606.600px;top:366.48px">    },</div>
<div class="mono abs" style="left:606.600px;top:376.58px">    {</div>
<div class="mono abs" style="left:606.600px;top:386.67px">      <span class="k">"token"</span> : <span class="s">"16gb"</span>,</div>
<div class="mono abs" style="left:606.600px;top:396.77px">      <span class="k">"start_offset"</span> : <span class="n">9</span>,</div>
<div class="mono abs" style="left:606.600px;top:406.86px">      <span class="k">"end_offset"</span> : <span class="n">13</span>,</div>
<div class="mono abs" style="left:606.600px;top:416.95px">      <span class="k">"type"</span> : <span class="s">"&lt;ALPHANUM&gt;"</span>,</div>
<div class="mono abs" style="left:606.600px;top:427.05px">      <span class="k">"position"</span> : <span class="n">1</span></div>
<div class="mono abs" style="left:606.600px;top:437.14px">    },</div>
<div class="mono abs" style="left:606.600px;top:447.24px">    {</div>
<div class="mono abs" style="left:606.600px;top:457.33px">      <span class="k">"token"</span> : <span class="s">"ram"</span>,</div>
<div class="mono abs" style="left:606.600px;top:467.42px">      <span class="k">"start_offset"</span> : <span class="n">14</span>,</div>
<div class="mono abs" style="left:606.600px;top:477.52px">      <span class="k">"end_offset"</span> : <span class="n">17</span>,</div>
<div class="mono abs" style="left:606.600px;top:487.61px">      <span class="k">"type"</span> : <span class="s">"&lt;ALPHANUM&gt;"</span>,</div>
<div class="mono abs" style="left:606.600px;top:497.71px">      <span class="k">"position"</span> : <span class="n">2</span></div>
<div class="mono abs" style="left:606.600px;top:507.80px">    }</div>
<div class="mono abs" style="left:606.600px;top:517.89px">  ]</div>
<div class="mono abs" style="left:606.600px;top:527.99px">}</div>

<!-- floating bird -->
<div class="abs" style="left:1070px;top:323px;width:33px;height:42px;background:#f8f9fc"></div>
<svg class="abs" style="left:1071px;top:326px" width="32" height="35" viewBox="0 0 32 35"><defs><linearGradient id="hx" x1="0" y1="0" x2="1" y2="0"><stop offset="0" stop-color="#3f80ef"/><stop offset=".45" stop-color="#4a8af4"/><stop offset="1" stop-color="#5b96f8"/></linearGradient></defs><path d="M13.600 1.900Q15.800 .7 18 1.900L28.400 7.900Q30.600 9.200 30.600 11.700V23.300Q30.600 25.800 28.400 27.100L18 33.100Q15.800 34.300 13.600 33.100L3.200 27.100Q1 25.800 1 23.300V11.700Q1 9.200 3.200 7.900Z" fill="url(#hx)"/><path d="M5.700 11.200Q8.200 10.400 10.200 11.600Q12.500 13.400 15 12.800Q20.500 10.800 25.400 7.200Q24.600 12.800 21 16.400L25.900 19.200L19.800 20.800Q19 25 19.700 28.600Q16.800 24.800 13.600 22.800Q10 20.400 10 16.600Q10 13.600 8.200 12.700Z" fill="#eef5fd"/></svg>
<!--KB-END-->
</body></html>
